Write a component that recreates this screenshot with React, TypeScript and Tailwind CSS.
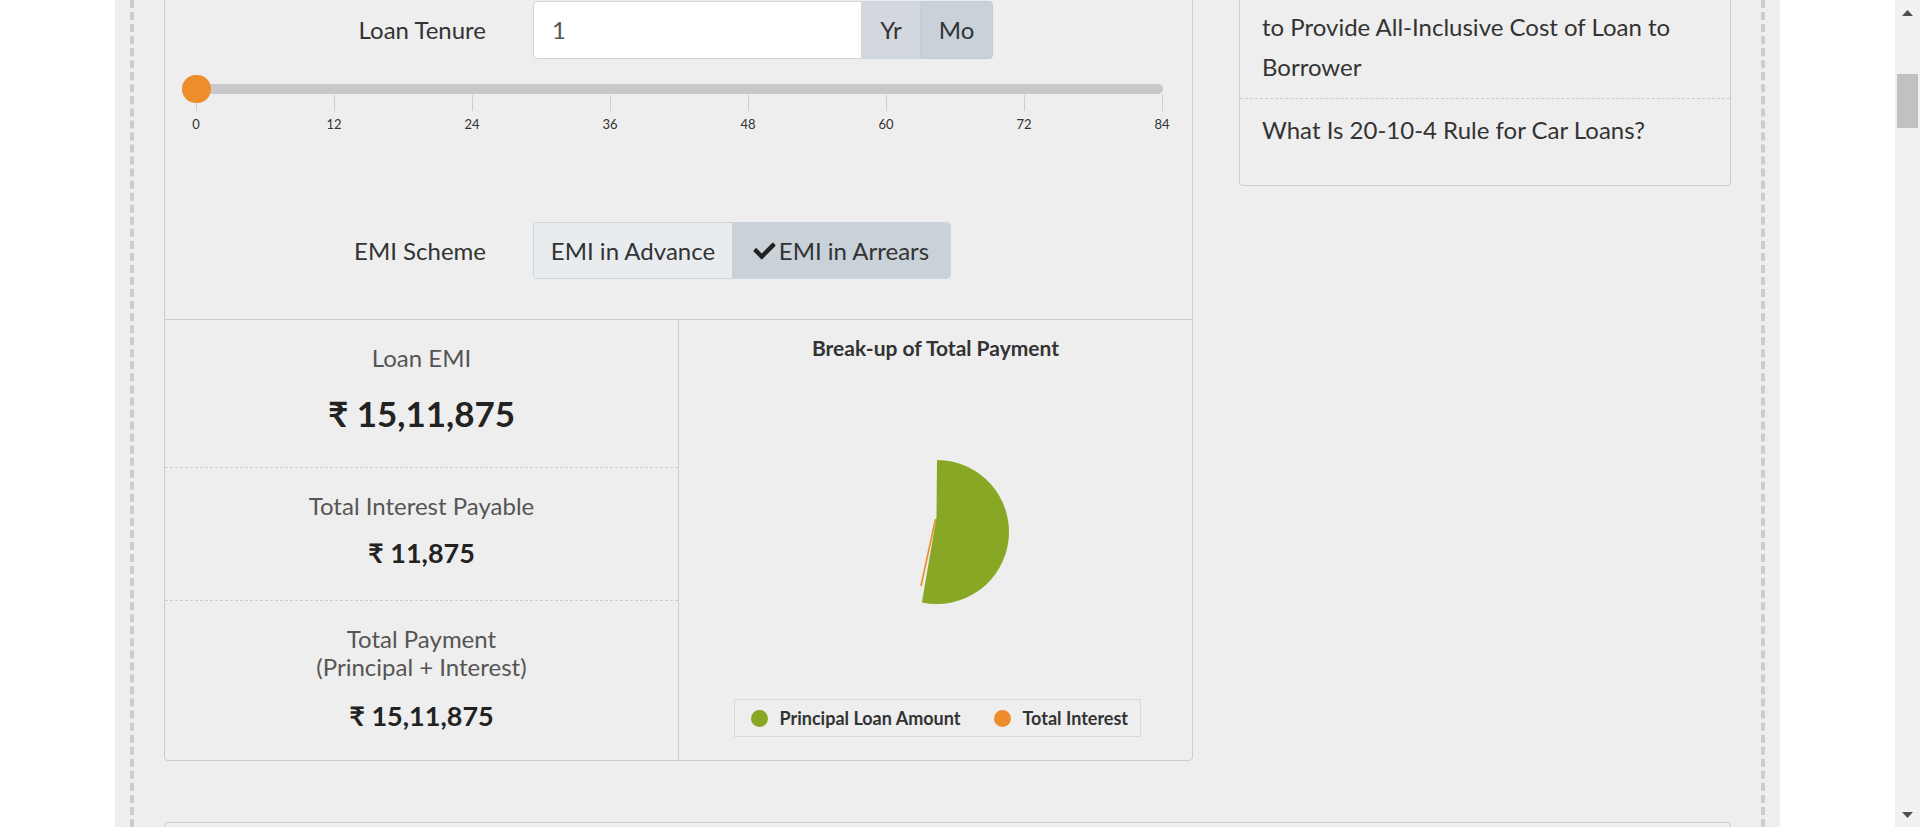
import React from "react";
import { FaCheck } from "react-icons/fa";

const ticks = [0, 12, 24, 36, 48, 60, 72, 84];

function Slider() {
  return (
    <div className="mt-[25px] ml-[31px] w-[967px]">
      <div className="relative h-[10px] w-[967px] rounded-full bg-[#c8c8c8]">
        <div className="absolute left-[-14px] top-[-9px] h-[28px] w-[29px] rounded-full bg-[#ee8d2c]" />
      </div>
      <div className="mt-[1px] flex w-[966px] justify-between">
        {ticks.map((t) => (
          <div key={t} className="flex w-0 flex-col items-center">
            <div className="h-[16px] w-px bg-[#cccccc]" />
            <div className="mt-[5px] whitespace-nowrap text-[13px] leading-[16px] text-[#333]">{t}</div>
          </div>
        ))}
      </div>
    </div>
  );
}

function ResultRow({
  label,
  value,
  big,
  h,
  pt,
  mt,
  dashed,
}: {
  label: React.ReactNode;
  value: string;
  big?: boolean;
  h: string;
  pt: string;
  mt: string;
  dashed?: boolean;
}) {
  return (
    <div className={`${h} ${pt} ${dashed ? "border-b border-dashed border-[#cccccc]" : ""} flex flex-col items-center text-center`}>
      <div className="whitespace-nowrap text-[24px] leading-[28px] text-[#555]">{label}</div>
      <div
        className={`${mt} whitespace-nowrap font-bold text-[#222] ${big ? "text-[35px] leading-[44px]" : "text-[27px] leading-[34px]"}`}
      >
        {value}
      </div>
    </div>
  );
}

function Pie() {
  return (
    <svg width="513" height="338" viewBox="0 0 513 338">
      <path d="M258 100 A72 72 0 1 1 242.9 242.4 L257.5 157 Z" fill="#88a825" />
      <line x1="256.5" y1="159" x2="242" y2="226" stroke="#ed8c2b" strokeWidth="1.6" />
    </svg>
  );
}

export default function App() {
  return (
    <div className="flex h-[827px] w-[1920px] overflow-hidden bg-white font-[Lato,'Noto_Sans',sans-serif] text-[#333]">
      <div className="flex flex-1 justify-center">
        <div className="h-full w-[1665px] bg-[#eeeeee] px-[15px]">
          <div className="flex h-full flex-col border-x-4 border-dashed border-[#cccccc] px-[30px]">
            <div className="-mt-[46px] flex shrink-0 items-start gap-[46px]">
              {/* Calculator panel */}
              <div className="w-[1029px] rounded-[4px] border border-[#cccccc] pt-[46px]">
                <div className="flex h-[58px] items-center">
                  <div className="w-[321px] text-right text-[24px]">Loan Tenure</div>
                  <div className="ml-[47px] flex h-[58px] w-[460px] text-[24px]">
                    <div className="flex w-[329px] items-center rounded-l-[4px] border border-[#ced4da] bg-white pl-[18px] text-[#555]">
                      1
                    </div>
                    <div className="flex w-[58px] items-center justify-center border-y border-[#ced4da] bg-[#d2d8de]">
                      Yr
                    </div>
                    <div className="flex w-[73px] items-center justify-center rounded-r-[4px] border border-[#c3cbd3] bg-[#c9d1d9]">
                      Mo
                    </div>
                  </div>
                </div>
                <Slider />
                <div className="mt-[90px] flex h-[57px] items-center">
                  <div className="w-[321px] text-right text-[24px]">EMI Scheme</div>
                  <div className="ml-[47px] flex h-[57px] overflow-hidden rounded-[4px] border border-[#ced4da] text-[24px]">
                    <div className="flex w-[198px] items-center justify-center whitespace-nowrap bg-[#e9ecef]">EMI in Advance</div>
                    <div className="flex w-[218px] items-center justify-center gap-[3px] whitespace-nowrap bg-[#c9d1d9]">
                      <FaCheck className="h-[22px] w-[23px] text-[#222]" />
                      <span>EMI in Arrears</span>
                    </div>
                  </div>
                </div>
                <div className="mt-[40px] flex border-t border-[#cccccc]">
                  <div className="w-[514px] border-r border-[#cccccc]">
                    <ResultRow label="Loan EMI" value="₹ 15,11,875" big h="h-[148px]" pt="pt-[24px]" mt="mt-[19px]" dashed />
                    <ResultRow label="Total Interest Payable" value="₹ 11,875" h="h-[133px]" pt="pt-[24px]" mt="mt-[16px]" dashed />
                    <ResultRow
                      label={
                        <>
                          Total Payment
                          <br />
                          (Principal + Interest)
                        </>
                      }
                      value="₹ 15,11,875"
                      h="h-[159px]"
                      pt="pt-[24px]"
                      mt="mt-[18px]"
                    />
                  </div>
                  <div className="flex flex-1 flex-col items-center pt-[16px]">
                    <div className="whitespace-nowrap text-[21px] font-bold leading-[24px] text-[#333]">Break-up of Total Payment</div>
                    <Pie />
                    <div className="ml-[3px] mt-[1px] flex h-[38px] w-[407px] items-center whitespace-nowrap border border-[#d9d9d9] pl-[16px] text-[18px] font-bold text-[#333]">
                      <span className="h-[17px] w-[17px] shrink-0 rounded-full bg-[#88a825]" />
                      <span className="ml-[12px]">Principal Loan Amount</span>
                      <span className="ml-[34px] h-[17px] w-[17px] shrink-0 rounded-full bg-[#ed8c2b]" />
                      <span className="ml-[11px]">Total Interest</span>
                    </div>
                  </div>
                </div>
              </div>

              {/* Right panel */}
              <div className="w-[492px] rounded-[4px] border border-[#cccccc] text-[24px] leading-[40px] text-[#333]">
                <div className="border-b border-dashed border-[#cccccc] px-[22px] pb-[11px] pt-[12px]">
                  <div className="whitespace-nowrap">Why Lenders Disclose APR Upfront</div>
                  <div className="whitespace-nowrap">to Provide All-Inclusive Cost of Loan to</div>
                  <div>Borrower</div>
                </div>
                <div className="whitespace-nowrap px-[22px] pb-[35px] pt-[11px]">What Is 20-10-4 Rule for Car Loans?</div>
              </div>
            </div>
            <div className="mt-[61px] h-[100px] shrink-0 rounded-t-[4px] border border-[#cccccc]" />
          </div>
        </div>
      </div>

      {/* scrollbar */}
      <div className="flex h-full w-[25px] flex-col bg-[#f1f1f1]">
        <div className="flex h-[25px] items-center justify-center">
          <svg width="11" height="6" viewBox="0 0 11 6">
            <polygon points="5.5,0 11,6 0,6" fill="#505050" />
          </svg>
        </div>
        <div className="mx-[2px] mt-[49px] h-[54px] bg-[#c1c1c1]" />
        <div className="flex-1" />
        <div className="flex h-[25px] items-center justify-center">
          <svg width="11" height="6" viewBox="0 0 11 6">
            <polygon points="0,0 11,0 5.5,6" fill="#505050" />
          </svg>
        </div>
      </div>
    </div>
  );
}
